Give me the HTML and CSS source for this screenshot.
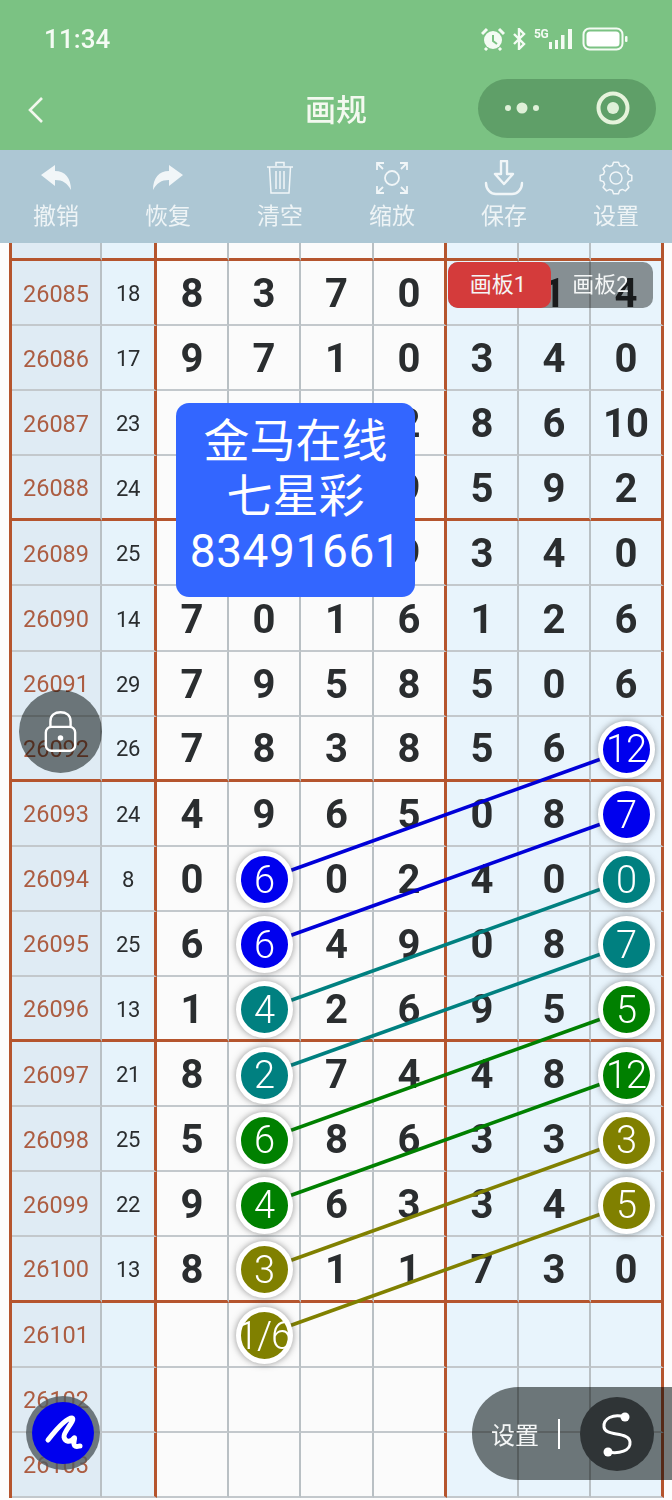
FILE: index.html
```html
<!DOCTYPE html>
<html lang="zh">
<head>
<meta charset="utf-8">
<title>画规</title>
<link rel="stylesheet" href="styles.css">
</head>
<body>
<div class="screen">
  <header class="head">
    <div class="status">
      <span class="time">11:34</span>
      <div class="sys">
        <svg class="i-alarm" viewBox="0 0 24 24"><circle cx="12" cy="13" r="9" fill="#f4fbf4"/><path d="M12 8v6l4 3" fill="none" stroke="#7bc283" stroke-width="2"/><path d="M1 7l5-5M23 7l-5-5M6 21l-2 2M18 21l2 2" stroke="#f4fbf4" stroke-width="3"/></svg>
        <svg class="i-bt" viewBox="0 0 14 22"><path d="M2 6l10 10-5 5V1l5 5L2 16" fill="none" stroke="#f4fbf4" stroke-width="2.4"/></svg>
        <span class="net">5G</span>
        <svg class="i-sig" viewBox="0 0 26 22"><path d="M1 14h3v7H1zM7 12h3v9H7zM13 7h3.500v14H13zM20 1h4v20h-4z" fill="#f4fbf4"/></svg>
        <svg class="i-bat" viewBox="0 0 46 24"><rect x="1.500" y="1.500" width="39" height="21" rx="6" fill="none" stroke="#f4fbf4" stroke-width="2"/><rect x="4.500" y="4.500" width="33" height="15" rx="3.500" fill="#fff"/><rect x="43" y="9" width="2.500" height="6" rx="1" fill="#f4fbf4"/></svg>
      </div>
    </div>
    <nav class="nav">
      <svg class="back" viewBox="0 0 18 28"><path d="M15 2L3 14l12 12" fill="none" stroke="#f2f8ee" stroke-width="2.600"/></svg>
      <h1 class="title">画规</h1>
      <div class="capsule">
        <svg class="dots" viewBox="0 0 36 12"><circle cx="4" cy="6" r="3" fill="#dff0d8"/><circle cx="18" cy="6" r="5.500" fill="#dff0d8"/><circle cx="32" cy="6" r="3" fill="#dff0d8"/></svg>
        <svg class="target" viewBox="0 0 34 34"><circle cx="17" cy="17" r="14.500" fill="none" stroke="#e6f3dc" stroke-width="4"/><circle cx="17" cy="17" r="6" fill="#dff0d8"/></svg>
      </div>
    </nav>
  </header>

  <div class="tools">
    <div class="tool"><svg class="ticon" viewBox="0 0 34 34"><path d="M2 14L16 4v6c10 0 16 7 16 19-4-7-8-10-16-10v6z" fill="#f1f6f8"/></svg><span>撤销</span></div>
    <div class="tool"><svg class="ticon" viewBox="0 0 34 34"><path d="M32 14L18 4v6C8 10 2 17 2 29c4-7 8-10 16-10v6z" fill="#f1f6f8"/></svg><span>恢复</span></div>
    <div class="tool"><svg class="ticon" viewBox="0 0 34 34"><path d="M4 6h26M13 5V1.500h8V5M6.500 6l1.500 26h18l1.500-26M13 10v18M17 10v18M21 10v18" fill="none" stroke="#f1f6f8" stroke-width="1.500"/></svg><span>清空</span></div>
    <div class="tool"><svg class="ticon" viewBox="0 0 34 34"><circle cx="17" cy="17" r="7" fill="none" stroke="#f1f6f8" stroke-width="1.800"/><path d="M2 9V2h7M2 2l6 6M32 9V2h-7M32 2l-6 6M2 25v7h7M2 32l6-6M32 25v7h-7M32 32l-6-6" fill="none" stroke="#f1f6f8" stroke-width="1.800"/></svg><span>缩放</span></div>
    <div class="tool"><svg class="ticon" viewBox="0 0 40 36"><path d="M17 1h6v13h6L20 24 11 14h6z" fill="none" stroke="#f1f6f8" stroke-width="2.400" stroke-linejoin="round"/><path d="M2 23c0 7 5 11 10 11h16c5 0 10-4 10-11" fill="none" stroke="#f1f6f8" stroke-width="2.400" stroke-linecap="round"/></svg><span>保存</span></div>
    <div class="tool"><svg class="ticon" viewBox="-17 -17 34 34"><polygon points="15.8,-2.500 15.8,2.500 12.500,3.600 11.400,6.300 12.900,9.400 9.400,12.900 6.300,11.400 3.600,12.500 2.500,15.800 -2.500,15.800 -3.600,12.500 -6.300,11.400 -9.400,12.900 -12.900,9.400 -11.400,6.300 -12.500,3.600 -15.800,2.500 -15.800,-2.500 -12.500,-3.600 -11.400,-6.300 -12.900,-9.400 -9.400,-12.900 -6.300,-11.400 -3.600,-12.500 -2.500,-15.800 2.500,-15.800 3.600,-12.500 6.300,-11.400 9.400,-12.900 12.900,-9.400 11.400,-6.300 12.500,-3.600" fill="none" stroke="#f1f6f8" stroke-width="1.500" stroke-linejoin="round"/><circle r="6" fill="none" stroke="#f1f6f8" stroke-width="1.500"/></svg><span>设置</span></div>
  </div>

  <main class="board">
    <svg class="lines" viewBox="0 243 672 1257">
      <line x1="264" y1="880" x2="626" y2="750" stroke="#0000d8"/>
      <line x1="264" y1="945" x2="626" y2="815" stroke="#0000d8"/>
      <line x1="264" y1="1010" x2="626" y2="880" stroke="#008080"/>
      <line x1="264" y1="1075" x2="626" y2="945" stroke="#008080"/>
      <line x1="264" y1="1140" x2="626" y2="1010" stroke="#008000"/>
      <line x1="264" y1="1205" x2="626" y2="1075" stroke="#008000"/>
      <line x1="264" y1="1270" x2="626" y2="1140" stroke="#808000"/>
      <line x1="264" y1="1335" x2="626" y2="1205" stroke="#808000"/>
    </svg>
    <div class="row stub end"><div></div><div></div><div></div><div></div><div></div><div></div><div></div><div></div><div></div></div>
    <div class="row"><div>26085</div><div>18</div><div>8</div><div>3</div><div>7</div><div>0</div><div></div><div>1</div><div>4</div></div>
    <div class="row"><div>26086</div><div>17</div><div>9</div><div>7</div><div>1</div><div>0</div><div>3</div><div>4</div><div>0</div></div>
    <div class="row"><div>26087</div><div>23</div><div></div><div></div><div></div><div>2</div><div>8</div><div>6</div><div>10</div></div>
    <div class="row end"><div>26088</div><div>24</div><div></div><div></div><div></div><div>9</div><div>5</div><div>9</div><div>2</div></div>
    <div class="row"><div>26089</div><div>25</div><div></div><div></div><div></div><div>9</div><div>3</div><div>4</div><div>0</div></div>
    <div class="row"><div>26090</div><div>14</div><div>7</div><div>0</div><div>1</div><div>6</div><div>1</div><div>2</div><div>6</div></div>
    <div class="row"><div>26091</div><div>29</div><div>7</div><div>9</div><div>5</div><div>8</div><div>5</div><div>0</div><div>6</div></div>
    <div class="row end"><div>26092</div><div>26</div><div>7</div><div>8</div><div>3</div><div>8</div><div>5</div><div>6</div><div><b class="ball blue">12</b></div></div>
    <div class="row"><div>26093</div><div>24</div><div>4</div><div>9</div><div>6</div><div>5</div><div>0</div><div>8</div><div><b class="ball blue">7</b></div></div>
    <div class="row"><div>26094</div><div>8</div><div>0</div><div><b class="ball blue">6</b></div><div>0</div><div>2</div><div>4</div><div>0</div><div><b class="ball teal">0</b></div></div>
    <div class="row"><div>26095</div><div>25</div><div>6</div><div><b class="ball blue">6</b></div><div>4</div><div>9</div><div>0</div><div>8</div><div><b class="ball teal">7</b></div></div>
    <div class="row end"><div>26096</div><div>13</div><div>1</div><div><b class="ball teal">4</b></div><div>2</div><div>6</div><div>9</div><div>5</div><div><b class="ball green">5</b></div></div>
    <div class="row"><div>26097</div><div>21</div><div>8</div><div><b class="ball teal">2</b></div><div>7</div><div>4</div><div>4</div><div>8</div><div><b class="ball green">12</b></div></div>
    <div class="row"><div>26098</div><div>25</div><div>5</div><div><b class="ball green">6</b></div><div>8</div><div>6</div><div>3</div><div>3</div><div><b class="ball olive">3</b></div></div>
    <div class="row"><div>26099</div><div>22</div><div>9</div><div><b class="ball green">4</b></div><div>6</div><div>3</div><div>3</div><div>4</div><div><b class="ball olive">5</b></div></div>
    <div class="row end"><div>26100</div><div>13</div><div>8</div><div><b class="ball olive">3</b></div><div>1</div><div>1</div><div>7</div><div>3</div><div>0</div></div>
    <div class="row"><div>26101</div><div></div><div></div><div><b class="ball olive">1/6</b></div><div></div><div></div><div></div><div></div><div></div></div>
    <div class="row"><div>26102</div><div></div><div></div><div></div><div></div><div></div><div></div><div></div><div></div></div>
    <div class="row"><div>26103</div><div></div><div></div><div></div><div></div><div></div><div></div><div></div><div></div></div>
  </main>

  <div class="tabs"><span class="tab on">画板1</span><span class="tab">画板2</span></div>

  <div class="promo">金马在线<br>七星彩<br><span class="promo-num">83491661</span></div>

  <div class="lock">
    <svg viewBox="0 0 36 46"><path d="M7 19V12C7 5 12 2 18 2s11 3 11 10v7" fill="none" stroke="#fff" stroke-width="2.600"/><rect x="2" y="18" width="32" height="26" rx="6" fill="none" stroke="#fff" stroke-width="2.600"/><circle cx="18" cy="30" r="3" fill="#fff"/></svg>
  </div>

  <div class="pen">
    <div class="pen-in">
      <svg viewBox="0 0 62 62"><path d="M16 38C23 29 34 16 40 16c4 2-9 14-8 19 1 5 6 6 10 1 2-2-2 7 1 8 2 1 4 0 5 0" fill="none" stroke="#fff" stroke-width="5" stroke-linecap="round" stroke-linejoin="round"/></svg>
    </div>
  </div>

  <div class="pill">
    <span class="pill-text">设置</span>
    <i class="pill-bar"></i>
    <div class="pill-btn">
      <svg viewBox="0 0 74 74"><path d="M45 20C33 16 23 22 24 30c1 10 25 4 26 15 1 9-11 12-22 10" fill="none" stroke="#fff" stroke-width="3"/><circle cx="45" cy="20" r="4.500" fill="#fff"/><circle cx="28" cy="55" r="4.500" fill="#fff"/></svg>
    </div>
  </div>
</div>
</body>
</html>
```

FILE: styles.css
```css
* { box-sizing: border-box; }
html, body { margin: 0; padding: 0; }
body {
  width: 672px;
  height: 1500px;
  overflow: hidden;
  background: #fdfdfd;
  font-family: Roboto, "Noto Sans CJK SC", sans-serif;
}
.screen { position: relative; width: 672px; height: 1500px; overflow: hidden; }

/* header */
.head { height: 150px; background: #7bc283; color: #f4fbf4; }
.status {
  height: 78px;
  padding: 0 44px 0 44px;
  display: flex;
  align-items: center;
  justify-content: space-between;
}
.time { font-size: 26px; font-weight: 500; letter-spacing: .1px; }
.sys { display: flex; align-items: center; margin-right: 1px; }
.i-alarm { width: 24px; height: 24px; }
.i-bt { width: 14px; height: 22px; margin-left: 7px; }
.net { font-size: 12px; font-weight: 700; width: 14px; margin-left: 8px; margin-bottom: 10px; letter-spacing: -.5px; }
.i-sig { width: 26px; height: 22px; margin-right: 8px; }
.i-bat { width: 46px; height: 24px; margin-right: -1px; }
.nav {
  height: 72px;
  display: grid;
  grid-template-columns: 1fr auto 1fr;
  align-items: center;
}
.back { width: 18px; height: 28px; margin-left: 27px; margin-top: -8px; }
.title { margin: -14px 0 0; font-size: 31px; font-weight: 500; color: #f4f9f0; }
.capsule {
  justify-self: end;
  margin: -12px 16px 0 0;
  width: 178px;
  height: 59px;
  border-radius: 30px;
  background: #5f9f68;
  display: flex;
  align-items: center;
  padding: 0 26px 0 26px;
  justify-content: space-between;
}
.dots { width: 36px; height: 12px; }
.target { width: 34px; height: 34px; }

/* toolbar */
.tools { height: 93px; background: #adc7d4; display: flex; }
.tool {
  width: 112px;
  display: flex;
  flex-direction: column;
  align-items: center;
  color: #eef4f6;
  font-size: 23px;
  line-height: 30px;
}
.ticon { width: 34px; height: 34px; margin-top: 11px; margin-bottom: 7px; }
.tool:nth-child(5) .ticon { width: 40px; height: 36px; margin-top: 10px; margin-bottom: 6px; }

/* board */
.board {
  position: relative;
  margin-left: 9px;
  width: 655px;
  border-left: 3px solid #b5552e;
}
.lines {
  position: absolute;
  left: -12px;
  top: 0;
  width: 672px;
  height: 1257px;
  z-index: 1;
  pointer-events: none;
}
.lines line { stroke-width: 3.6; }
.row {
  display: grid;
  grid-template-columns: 90px 55px 72px 72px 73px 73px 72px 72px 73px;
  height: 65.1px;
}
.row > div {
  display: flex;
  align-items: center;
  justify-content: center;
  padding-top: 2px;
  border-right: 2px solid #b9c0c4;
  border-bottom: 2px solid #c3c8cc;
  color: #2a2d2f;
  font-size: 40px;
  font-weight: 700;
  background: #fbfbfb;
}
.row > div:nth-child(1) {
  background: #dfebf4;
  color: #ac5d42;
  font-size: 23.5px;
  font-weight: 400;
}
.row > div:nth-child(2) {
  background: #e6f3fb;
  font-size: 22px;
  font-weight: 400;
  letter-spacing: -.4px;
}
.row > div:nth-child(n+7) { background: #e8f4fc; }
.row > div:nth-child(2),
.row > div:nth-child(6),
.row > div:nth-child(9) { border-right: 3px solid #b5552e; }
.row.end > div { border-bottom: 3px solid #b5552e; }
.row.stub { height: 18px; }
.ball {
  position: relative;
  z-index: 2;
  flex: none;
  width: 57px;
  height: 57px;
  margin-top: 1px;
  border-radius: 50%;
  border: 5px solid #fff;
  box-shadow: 0 0 7px rgba(60, 60, 60, .55);
  display: flex;
  align-items: center;
  justify-content: center;
  color: #fff;
  font-size: 38px;
  font-weight: 300;
  letter-spacing: -1px;
  white-space: nowrap;
}
.blue { background: #0000ee; }
.teal { background: #008080; }
.green { background: #008000; }
.olive { background: #808000; }

/* overlays: the grey veils multiply over the board, so what lies under them stays dark */
.tabs,
.lock,
.pill { isolation: auto; }
.tabs::before,
.lock::before,
.pill::before {
  content: "";
  position: absolute;
  inset: 0;
  border-radius: inherit;
  mix-blend-mode: multiply;
}
.tabs {
  position: absolute;
  left: 448px;
  top: 262px;
  width: 205px;
  height: 46px;
  display: flex;
  border-radius: 10px;
}
.tabs::before { background: #939695; }
.tab {
  position: relative;
  flex: 1;
  display: flex;
  align-items: center;
  justify-content: center;
  color: #f4f6f6;
  font-size: 22px;
  padding: 0 3px 6px 0;
}
.tab.on { background: #d43b3b; border-radius: 10px; flex: 0 0 103px; }
.promo {
  position: absolute;
  left: 176px;
  top: 403px;
  width: 239px;
  height: 194px;
  z-index: 3;
  background: #3366ff;
  border-radius: 13px;
  color: #fff;
  font-size: 46px;
  line-height: 55px;
  text-align: center;
  padding-top: 11px;
}
.promo-num { letter-spacing: .6px; }
.lock {
  position: absolute;
  left: 19px;
  top: 690px;
  width: 83px;
  height: 83px;
  border-radius: 50%;
  display: flex;
  align-items: center;
  justify-content: center;
}
.lock::before { background: #7a7f7e; }
.lock svg { position: relative; width: 33px; height: 43px; }
.pen {
  position: absolute;
  left: 26px;
  top: 1396px;
  width: 74px;
  height: 74px;
  z-index: 3;
  border-radius: 50%;
  background: rgba(80, 90, 95, .8);
  display: flex;
  align-items: center;
  justify-content: center;
}
.pen-in { width: 62px; height: 62px; border-radius: 50%; background: #0000ee; }
.pen-in svg { display: block; width: 62px; height: 62px; }
.pill {
  position: absolute;
  left: 472px;
  top: 1387px;
  width: 200px;
  height: 93px;
  border-radius: 47px 0 0 47px;
  display: flex;
  align-items: center;
  color: #f4f6f6;
  font-size: 24px;
  padding-left: 19px;
}
.pill::before { background: #777b7a; }
.pill-text { position: relative; width: 50px; }
.pill-bar { position: relative; width: 2px; height: 30px; background: #fff; margin-left: 17px; }
.pill-btn {
  position: relative;
  width: 74px;
  height: 74px;
  margin-left: 20px;
  border-radius: 50%;
  background: #2f3436;
}
.pill-btn svg { display: block; width: 74px; height: 74px; }
```
